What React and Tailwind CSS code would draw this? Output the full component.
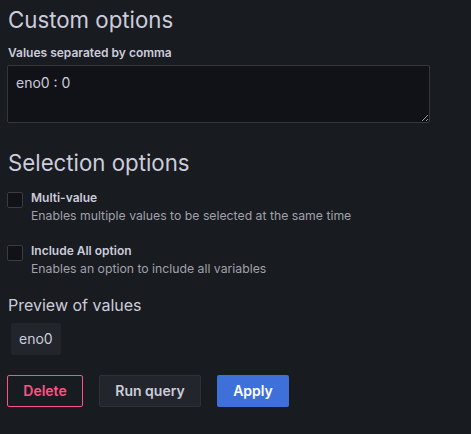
const font = { fontFamily: "Inter, 'Noto Sans', sans-serif" };

const CheckOption = ({ label, description }) => (
    <div className="flex gap-2 items-start">
        <span className="mt-[3px] w-4 h-4 shrink-0 rounded-[2px] border border-[#3a3c42] bg-[#111217]" />
        <div className="flex flex-col">
            <span className="text-xs font-semibold text-[#ccccdc] leading-[18px]">{label}</span>
            <span className="text-[12.25px] text-[#a0a1ad] leading-[18px]">{description}</span>
        </div>
    </div>
);

export default function App() {
    return (
        <div className="w-[471px] h-[434px] bg-[#181b1f] text-[#ccccdc] px-2 pt-[5px]" style={font}>
            <h3 className="text-[22.25px] leading-[30px]">Custom options</h3>

            <div className="mt-[10px] flex flex-col">
                <label className="text-xs font-semibold leading-4">Values separated by comma</label>
                <textarea
                    defaultValue="eno0 : 0"
                    className="mt-[4px] -ml-px w-[423px] h-[58px] rounded-[2px] border border-[#35373d] bg-[#111217] px-2 py-[7px] text-sm text-[#ccccdc] outline-none"
                />
            </div>

            <h3 className="mt-[25px] text-[22.25px] leading-[30px]">Selection options</h3>

            <div className="mt-[11px] flex flex-col gap-[17px] -ml-px">
                <CheckOption label="Multi-value" description="Enables multiple values to be selected at the same time" />
                <CheckOption label="Include All option" description="Enables an option to include all variables" />
            </div>

            <h4 className="mt-[15px] text-base leading-6">Preview of values</h4>

            <div className="mt-[6px] flex">
                <span className="ml-[3px] px-[8px] h-8 flex items-center rounded-[2px] bg-[#22252b] text-sm">eno0</span>
            </div>

            <div className="mt-[20px] -ml-px flex gap-4">
                <button className="h-8 w-[76px] flex items-center justify-center rounded-[2px] border border-[#ff5286] text-sm font-semibold text-[#ff5286]">Delete</button>
                <button className="h-8 w-[102px] flex items-center justify-center rounded-[2px] border border-[#2f3137] bg-[#22252b] text-sm font-semibold text-[#ccccdc]">Run query</button>
                <button className="h-8 w-[72px] flex items-center justify-center rounded-[2px] bg-[#3d71d9] text-sm font-semibold text-white">Apply</button>
            </div>
        </div>
    );
}
